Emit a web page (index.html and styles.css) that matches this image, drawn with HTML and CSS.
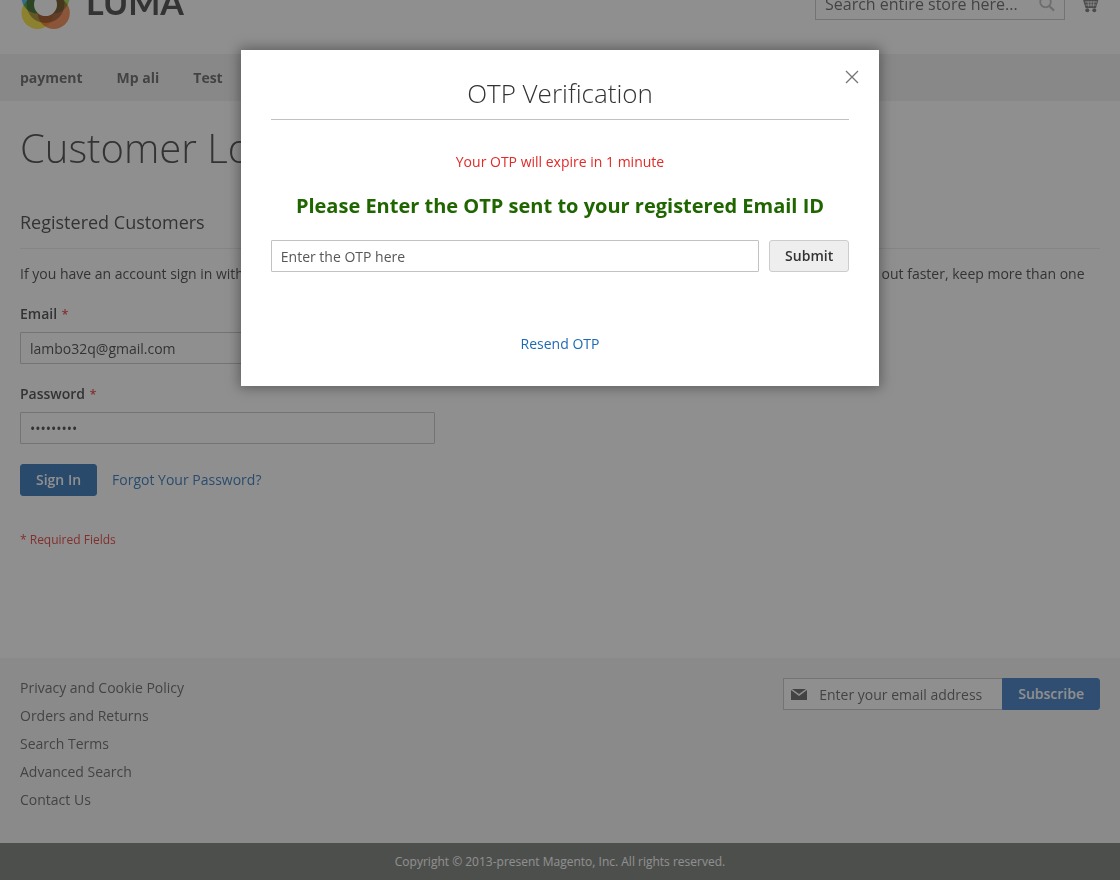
FILE: index.html
```html
<!DOCTYPE html>
<html lang="en">
<head>
<meta charset="utf-8">
<meta name="viewport" content="width=device-width, initial-scale=1">
<title>Customer Login</title>
<link rel="stylesheet" href="styles.css">
</head>
<body>
<div class="page">
  <header class="header">
    <a class="logo" href="#" aria-label="Luma">
      <svg class="logo-mark" viewBox="0 0 51 56" width="51" height="56" aria-hidden="true">
        <defs>
          <mask id="hole"><rect width="51" height="56" fill="#fff"/><circle cx="25.5" cy="30.5" r="11.5" fill="#000"/></mask>
        </defs>
        <g mask="url(#hole)">
          <g class="petals">
            <circle cx="17.5" cy="23.5" r="16" fill="#35b4f2"/>
            <circle cx="33.5" cy="23.5" r="16" fill="#95d83c"/>
            <circle cx="17.5" cy="39" r="16" fill="#f8e02a"/>
            <circle cx="33.8" cy="39" r="16" fill="#f67f42"/>
            <circle cx="25.5" cy="30" r="19" fill="#a4937f"/>
          </g>
        </g>
      </svg>
      <span class="logo-text">LUMA</span>
    </a>
    <div class="header-tools">
      <form class="search">
        <input class="search-input" type="text" aria-label="Search" placeholder="Search entire store here...">
        <button class="search-button" type="button" aria-label="Search">
          <svg viewBox="0 0 16 16" width="16" height="16" aria-hidden="true"><circle cx="6.5" cy="6" r="5.3" fill="none" stroke="#b5b5b5" stroke-width="1.8"/><path d="M10.3 10l4.7 4.6" stroke="#b5b5b5" stroke-width="2.2"/></svg>
        </button>
      </form>
      <a class="cart" href="#" aria-label="My Cart">
        <svg viewBox="0 0 20 20" width="20" height="20" aria-hidden="true"><path d="M1 2h3l1 3.500H18.500L16 14H5.500L2.500 4H1z" fill="#6b6b6b"/><path d="M5 8h12M5.500 11h11" stroke="#fff" stroke-width=".8"/><path d="M8 7l.5 5.500M11 7v5.500M14 7l-.5 5.500" stroke="#fff" stroke-width=".8"/><circle cx="7.300" cy="16.300" r="2" fill="#6b6b6b"/><circle cx="14.300" cy="16.300" r="2" fill="#6b6b6b"/></svg>
      </a>
    </div>
  </header>
  <nav class="nav">
    <a href="#">payment</a>
    <a href="#">Mp ali</a>
    <a href="#">Test</a>
  </nav>
  <main class="main">
    <h1 class="page-title">Customer Login</h1>
    <div class="columns">
      <section class="block">
        <h2 class="block-title">Registered Customers</h2>
        <p class="note">If you have an account sign in with your email address.</p>
        <form class="login">
          <div class="field">
            <label for="email">Email <span class="star">*</span></label>
            <input class="input" id="email" type="email" value="lambo32q@gmail.com">
          </div>
          <div class="field">
            <label for="pass">Password <span class="star">*</span></label>
            <input class="input" id="pass" type="password" value="magento12">
          </div>
          <div class="actions">
            <button class="button primary sign-in" type="button">Sign In</button>
            <a class="link" href="#">Forgot Your Password?</a>
          </div>
          <p class="required">* Required Fields</p>
        </form>
      </section>
      <section class="block">
        <h2 class="block-title">New Customers</h2>
        <p class="note">Creating an account has many benefits: check out faster, keep more than one address, track orders and more.</p>
      </section>
    </div>
  </main>
  <footer class="footer">
    <ul class="footer-links">
      <li><a href="#">Privacy and Cookie Policy</a></li>
      <li><a href="#">Orders and Returns</a></li>
      <li><a href="#">Search Terms</a></li>
      <li><a href="#">Advanced Search</a></li>
      <li><a href="#">Contact Us</a></li>
    </ul>
    <form class="newsletter">
      <label class="newsletter-field">
        <svg viewBox="0 0 16 11" width="16" height="11" aria-hidden="true"><path d="M0 1l8 6 8-6v10H0z" fill="#575757"/><path d="M1 0h14L8 5z" fill="#575757"/></svg>
        <input type="email" aria-label="Newsletter email" placeholder="Enter your email address">
      </label>
      <button class="button primary joined" type="button">Subscribe</button>
    </form>
  </footer>
  <small class="copyright">Copyright © 2013-present Magento, Inc. All rights reserved.</small>
</div>
<div class="overlay">
  <div class="modal" role="dialog" aria-modal="true" aria-labelledby="otp-title">
    <button class="close" type="button" aria-label="Close">
      <svg viewBox="0 0 14 14" width="14" height="14" aria-hidden="true"><path d="M1 1l12 12M13 1L1 13" stroke="#757575" stroke-width="1.3"/></svg>
    </button>
    <h2 class="modal-title" id="otp-title">OTP Verification</h2>
    <p class="expiry">Your OTP will expire in 1 minute</p>
    <h3 class="prompt">Please Enter the OTP sent to your registered Email ID</h3>
    <form class="otp">
      <input class="input" type="text" aria-label="OTP" placeholder="Enter the OTP here">
      <button class="button" type="button">Submit</button>
    </form>
    <a class="link resend" href="#">Resend OTP</a>
  </div>
</div>
</body>
</html>
```
FILE: styles.css
```css
* { box-sizing: border-box; }
body {
  margin: 0;
  font-family: "Open Sans", sans-serif;
  font-size: 14px;
  line-height: 20px;
  color: #333;
  background: #fff;
}
h1, h2, h3, p, ul { margin: 0; padding: 0; }
a { color: inherit; text-decoration: none; }
input, button { font: inherit; color: inherit; margin: 0; }
svg { display: block; }
input::placeholder { color: #575757; opacity: 1; }

.page { display: flex; flex-direction: column; min-height: 100vh; }

.header {
  display: flex;
  justify-content: space-between;
  align-items: flex-end;
  height: 54px;
  padding: 0 20px;
  overflow: hidden;
}
.logo { display: flex; align-items: flex-end; gap: 15px; padding-bottom: 24px; }
.petals { isolation: isolate; }
.petals circle { mix-blend-mode: multiply; }
.logo-text { padding-bottom: 8px; color: #333; font: 700 34px/40px Lato, sans-serif; }
.header-tools { display: flex; align-items: flex-end; gap: 15px; padding-bottom: 34px; }
.search {
  display: flex;
  align-items: center;
  width: 250px;
  height: 32px;
  padding: 0 9px;
  border: 1px solid #c2c2c2;
}
.search-input { flex: 1; min-width: 0; padding: 0; border: 0; outline: 0; background: none; font-size: 16px; }
.search-button { padding: 0; border: 0; background: none; }
.cart { padding-bottom: 6px; }

.nav {
  display: flex;
  align-items: center;
  gap: 34px;
  height: 47px;
  padding: 0 20px;
  background: #f0f0f0;
  color: #575757;
  font-weight: 700;
}

.main { flex: 1; padding: 19px 20px 0; }
.page-title { font-size: 40px; font-weight: 300; line-height: 56px; }
.columns {
  display: grid;
  grid-template-columns: 1fr 1fr;
  margin-top: 33px;
}
.block-title {
  padding-bottom: 13px;
  border-bottom: 1px solid #e8e8e8;
  font-size: 18px;
  font-weight: 400;
  line-height: 26px;
}
.block + .block > * { padding-left: 20px; }
.note { padding-top: 15px; }
.login { display: flex; flex-direction: column; gap: 20px; margin-top: 20px; }
.field { display: flex; flex-direction: column; gap: 8px; max-width: 415px; }
.field label { font-weight: 600; }
.star { padding-left: 1px; font-size: 12px; line-height: 12px; color: #e02b27; }
.input {
  width: 100%;
  height: 32px;
  padding: 0 9px;
  border: 1px solid #c2c2c2;
  border-radius: 1px;
  background: #fff;
}
.actions { display: flex; align-items: center; gap: 15px; }
.button {
  height: 32px;
  padding: 0 15px;
  border: 1px solid #ccc;
  border-radius: 3px;
  background: #eee;
  font-weight: 600;
}
.primary { border-color: #2b70bc; background: #2b70bc; color: #fff; }
.sign-in { border-color: #1f67b2; background: #1f67b2; }
.link { color: #1f69b3; }
.required { padding-top: 14px; font-size: 12px; color: #e02b27; }

.footer {
  display: flex;
  justify-content: space-between;
  align-items: flex-start;
  padding: 20px 20px 33px;
  background: #f4f4f4;
  color: #575757;
}
.footer-links { display: flex; flex-direction: column; gap: 8px; list-style: none; }
.newsletter { display: flex; }
.newsletter-field {
  display: flex;
  align-items: center;
  gap: 12px;
  width: 219px;
  height: 32px;
  padding: 0 0 0 7px;
  border: 1px solid #c2c2c2;
  border-right: 0;
  background: #fff;
}
.newsletter-field input { flex: 1; min-width: 0; height: 100%; padding: 0; border: 0; outline: 0; background: none; }
.joined { border-radius: 0 3px 3px 0; }
.copyright {
  padding: 9px 20px 8px;
  background: #6e716e;
  color: #fff;
  font-size: 12px;
  text-align: center;
}

.overlay {
  position: fixed;
  inset: 0;
  display: flex;
  justify-content: center;
  align-items: flex-start;
  padding-top: 50px;
  background: rgba(51, 51, 51, 0.55);
}
.modal {
  position: relative;
  width: 57%;
  padding: 26px 30px 32px;
  background: #fff;
  box-shadow: 0 0 12px 2px rgba(0, 0, 0, 0.35);
  text-align: center;
}
.close { position: absolute; top: 20px; right: 20px; padding: 0; border: 0; background: none; }
.modal-title {
  padding-bottom: 8px;
  border-bottom: 1px solid #c1c1c1;
  font-size: 26px;
  font-weight: 300;
  line-height: 35px;
}
.expiry { padding-top: 32px; color: #e02b27; }
.prompt { padding-top: 20px; font-size: 20px; font-weight: 700; line-height: 28px; color: #206600; }
.otp { display: flex; gap: 10px; margin: 20px 0 62px; }
.otp .input { flex: 1; }
.resend { display: block; }
```
